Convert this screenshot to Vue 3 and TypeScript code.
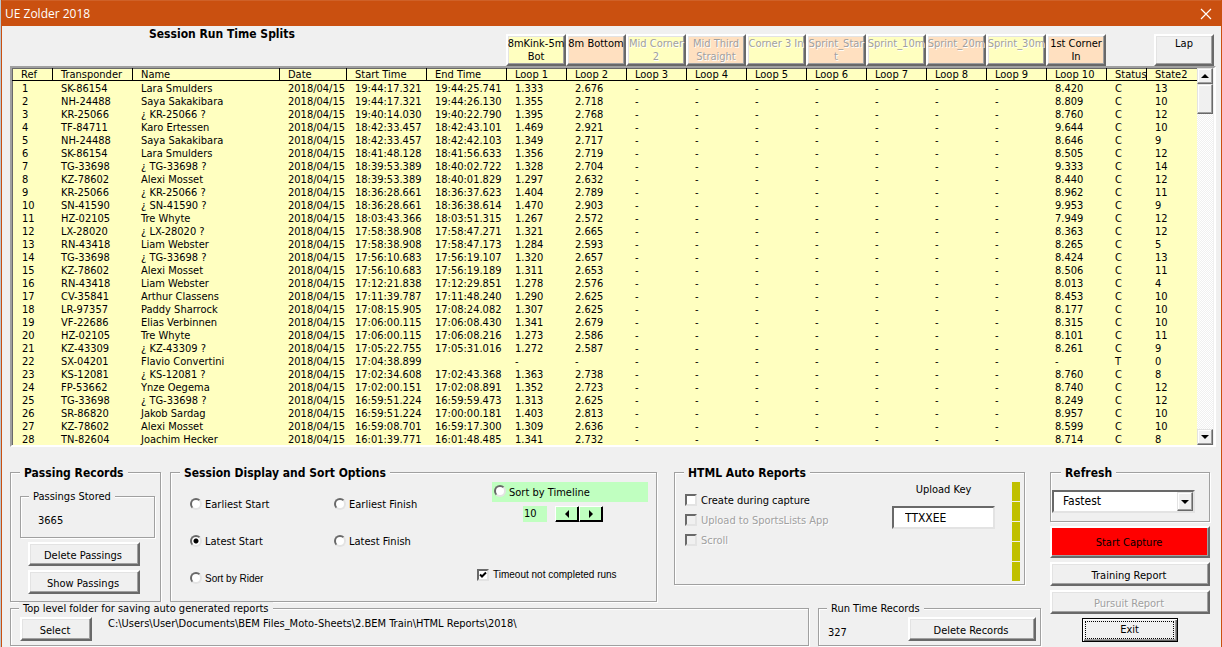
<script setup lang="ts">
import { ref } from 'vue'

interface LoopButton {
  label: string
  tone: 'yellow' | 'peach'
  enabled: boolean
}

const loopButtons: LoopButton[] = [
  { label: '8mKink-5m\nBot', tone: 'yellow', enabled: true },
  { label: '8m Bottom', tone: 'peach', enabled: true },
  { label: 'Mid Corner\n2', tone: 'yellow', enabled: false },
  { label: 'Mid Third\nStraight', tone: 'peach', enabled: false },
  { label: 'Corner 3 In', tone: 'yellow', enabled: false },
  { label: 'Sprint_Star\nt', tone: 'peach', enabled: false },
  { label: 'Sprint_10m', tone: 'yellow', enabled: false },
  { label: 'Sprint_20m', tone: 'peach', enabled: false },
  { label: 'Sprint_30m', tone: 'yellow', enabled: false },
  { label: '1st Corner\nIn', tone: 'peach', enabled: true },
]

const loopNumbers = Array.from({ length: 10 }, (_, i) => i + 1)

// transponder | name | start | end | loop 1 | loop 2 | loop 10 | status | state2
const source = `SK-86154|Lara Smulders|19:44:17.321|19:44:25.741|1.333|2.676|8.420|C|13
NH-24488|Saya Sakakibara|19:44:17.321|19:44:26.130|1.355|2.718|8.809|C|10
KR-25066|¿ KR-25066 ?|19:40:14.030|19:40:22.790|1.395|2.768|8.760|C|12
TF-84711|Karo Ertessen|18:42:33.457|18:42:43.101|1.469|2.921|9.644|C|10
NH-24488|Saya Sakakibara|18:42:33.457|18:42:42.103|1.349|2.717|8.646|C|9
SK-86154|Lara Smulders|18:41:48.128|18:41:56.633|1.356|2.719|8.505|C|12
TG-33698|¿ TG-33698 ?|18:39:53.389|18:40:02.722|1.328|2.704|9.333|C|14
KZ-78602|Alexi Mosset|18:39:53.389|18:40:01.829|1.297|2.632|8.440|C|12
KR-25066|¿ KR-25066 ?|18:36:28.661|18:36:37.623|1.404|2.789|8.962|C|11
SN-41590|¿ SN-41590 ?|18:36:28.661|18:36:38.614|1.470|2.903|9.953|C|9
HZ-02105|Tre Whyte|18:03:43.366|18:03:51.315|1.267|2.572|7.949|C|12
LX-28020|¿ LX-28020 ?|17:58:38.908|17:58:47.271|1.321|2.665|8.363|C|12
RN-43418|Liam Webster|17:58:38.908|17:58:47.173|1.284|2.593|8.265|C|5
TG-33698|¿ TG-33698 ?|17:56:10.683|17:56:19.107|1.320|2.657|8.424|C|13
KZ-78602|Alexi Mosset|17:56:10.683|17:56:19.189|1.311|2.653|8.506|C|11
RN-43418|Liam Webster|17:12:21.838|17:12:29.851|1.278|2.576|8.013|C|4
CV-35841|Arthur Classens|17:11:39.787|17:11:48.240|1.290|2.625|8.453|C|10
LR-97357|Paddy Sharrock|17:08:15.905|17:08:24.082|1.307|2.625|8.177|C|10
VF-22686|Elias Verbinnen|17:06:00.115|17:06:08.430|1.341|2.679|8.315|C|10
HZ-02105|Tre Whyte|17:06:00.115|17:06:08.216|1.273|2.586|8.101|C|11
KZ-43309|¿ KZ-43309 ?|17:05:22.755|17:05:31.016|1.272|2.587|8.261|C|9
SX-04201|Flavio Convertini|17:04:38.899||-|-|-|T|0
KS-12081|¿ KS-12081 ?|17:02:34.608|17:02:43.368|1.363|2.738|8.760|C|8
FP-53662|Ynze Oegema|17:02:00.151|17:02:08.891|1.352|2.723|8.740|C|12
TG-33698|¿ TG-33698 ?|16:59:51.224|16:59:59.473|1.313|2.625|8.249|C|12
SR-86820|Jakob Sardag|16:59:51.224|17:00:00.181|1.403|2.813|8.957|C|10
KZ-78602|Alexi Mosset|16:59:08.701|16:59:17.300|1.309|2.636|8.599|C|10
TN-82604|Joachim Hecker|16:01:39.771|16:01:48.485|1.341|2.732|8.714|C|8`

const rows: string[][] = source.split('\n').map((line, i) => {
  const [transponder, name, start, end, loop1, loop2, loop10, status, state] = line.split('|')
  return [
    String(i + 1), transponder, name, '2018/04/15', start, end,
    loop1, loop2, '-', '-', '-', '-', '-', '-', '-', loop10, status, state,
  ]
})

const sortBy = ref('latest-start')
const timeout = ref(true)
const createReports = ref(false)
const timeline = ref(10)
const uploadKey = ref('TTXXEE')
const refreshRate = ref('Fastest')
</script>

<template>
  <div class="window">
    <header class="titlebar">
      <span>UE Zolder 2018</span>
      <button class="close" type="button" aria-label="Close">
        <svg width="12" height="12" viewBox="0 0 12 12"><path d="M1 1L11 11M11 1L1 11" stroke="#fff" stroke-width="1.2" fill="none" /></svg>
      </button>
    </header>

    <main>
      <div class="top">
        <h1>Session Run Time Splits</h1>
        <button
          v-for="b in loopButtons"
          :key="b.label"
          type="button"
          class="btn loop"
          :class="b.tone"
          :disabled="!b.enabled"
        >{{ b.label }}</button>
        <button type="button" class="btn loop lap">Lap</button>
      </div>

      <div class="list">
        <table>
          <colgroup>
            <col class="c-ref"><col class="c-time"><col><col class="c-date">
            <col class="c-time"><col class="c-time">
            <col v-for="n in loopNumbers" :key="n" class="c-loop">
            <col class="c-status"><col class="c-state">
          </colgroup>
          <thead>
            <tr>
              <th>Ref</th><th>Transponder</th><th>Name</th><th>Date</th><th>Start Time</th><th>End Time</th>
              <th v-for="n in loopNumbers" :key="n">Loop {{ n }}</th>
              <th>Status</th><th>State2</th>
            </tr>
          </thead>
          <tbody>
            <tr v-for="row in rows" :key="row[0]">
              <td v-for="(cell, i) in row" :key="i">{{ cell }}</td>
            </tr>
          </tbody>
        </table>
        <div class="scroll">
          <button type="button" class="sbtn" aria-label="Scroll up">
            <svg width="8" height="4" viewBox="0 0 8 4"><path d="M0 4L4 0L8 4Z" /></svg>
          </button>
          <div class="thumb"></div>
          <div class="track"></div>
          <button type="button" class="sbtn" aria-label="Scroll down">
            <svg width="8" height="4" viewBox="0 0 8 4"><path d="M0 0L4 4L8 0Z" /></svg>
          </button>
        </div>
      </div>

      <div class="bottom">
        <div class="left">
          <div class="groups">
            <fieldset class="big passing">
              <legend>Passing Records</legend>
              <fieldset class="small stored">
                <legend>Passings Stored</legend>
                <output>3665</output>
              </fieldset>
              <button type="button" class="btn">Delete Passings</button>
              <button type="button" class="btn">Show Passings</button>
            </fieldset>

            <fieldset class="big session">
              <legend>Session Display and Sort Options</legend>
              <div class="sorts">
                <label><input v-model="sortBy" type="radio" name="sort" value="earliest-start">Earliest Start</label>
                <label><input v-model="sortBy" type="radio" name="sort" value="earliest-finish">Earliest Finish</label>
                <label><input v-model="sortBy" type="radio" name="sort" value="latest-start">Latest Start</label>
                <label><input v-model="sortBy" type="radio" name="sort" value="latest-finish">Latest Finish</label>
                <label class="narrow"><input v-model="sortBy" type="radio" name="sort" value="rider">Sort by Rider</label>
              </div>
              <div class="timeline">
                <label class="green"><input v-model="sortBy" type="radio" name="sort" value="timeline">Sort by Timeline</label>
                <div class="spinner">
                  <output>{{ timeline }}</output>
                  <button type="button" class="spin" aria-label="Decrease" @click="timeline--">
                    <svg width="4" height="8" viewBox="0 0 4 8"><path d="M4 0L0 4L4 8Z" /></svg>
                  </button>
                  <button type="button" class="spin" aria-label="Increase" @click="timeline++">
                    <svg width="4" height="8" viewBox="0 0 4 8"><path d="M0 0L4 4L0 8Z" /></svg>
                  </button>
                </div>
                <label class="narrow timeout"><input v-model="timeout" type="checkbox">Timeout not completed runs</label>
              </div>
            </fieldset>

            <fieldset class="big html">
              <legend>HTML Auto Reports</legend>
              <div class="checks">
                <label><input v-model="createReports" type="checkbox">Create during capture</label>
                <label class="off"><input type="checkbox" disabled>Upload to SportsLists App</label>
                <label class="off"><input type="checkbox" disabled>Scroll</label>
              </div>
              <div class="key">
                <label for="upload-key">Upload Key</label>
                <input id="upload-key" v-model="uploadKey" type="text">
              </div>
              <div class="meter"><i v-for="n in 5" :key="n"></i></div>
            </fieldset>
          </div>

          <div class="groups">
            <fieldset class="small folder">
              <legend>Top level folder for saving auto generated reports</legend>
              <button type="button" class="btn">Select</button>
              <span>C:\Users\User\Documents\BEM Files_Moto-Sheets\2.BEM Train\HTML Reports\2018\</span>
            </fieldset>
            <fieldset class="small records">
              <legend>Run Time Records</legend>
              <output>327</output>
              <button type="button" class="btn">Delete Records</button>
            </fieldset>
          </div>
        </div>

        <div class="right">
          <fieldset class="big refresh">
            <legend>Refresh</legend>
            <div class="combo">
              <select v-model="refreshRate" aria-label="Refresh">
                <option>Fastest</option>
                <option>Slowest</option>
              </select>
              <span class="drop"><svg width="8" height="4" viewBox="0 0 8 4"><path d="M0 0L4 4L8 0Z" /></svg></span>
            </div>
          </fieldset>
          <button type="button" class="btn capture">Start Capture</button>
          <button type="button" class="btn">Training Report</button>
          <button type="button" class="btn" disabled>Pursuit Report</button>
          <button type="button" class="btn exit"><span>Exit</span></button>
        </div>
      </div>
    </main>
  </div>
</template>

<style>
body {
  margin: 0;
  background: #b9c6d0;
}
</style>

<style scoped>
.window,
.window * {
  box-sizing: border-box;
}
.window {
  min-height: 100vh;
  margin-left: 1px;
  border: solid #ca5010;
  border-width: 0 1px;
  background: #f0f0f0;
  color: #000;
  font: 11px/13px "DejaVu Sans Condensed", Tahoma, "Noto Sans", sans-serif;
}
button,
input,
select {
  font: inherit;
  color: inherit;
  margin: 0;
  padding: 0;
  border-radius: 0;
}
svg {
  display: block;
}
.titlebar {
  height: 26px;
  padding: 0 9px 0 3px;
  display: flex;
  align-items: center;
  justify-content: space-between;
  background: #ca5010;
  border-top: 1px solid #cf6128;
  color: #fff;
  font: 12px/16px "Open Sans", "Noto Sans", sans-serif;
}
.close {
  border: 0;
  background: none;
}
main {
  padding: 0 5px 0 8px;
}
.top {
  height: 40px;
  display: flex;
  align-items: flex-end;
}
h1 {
  flex: 1;
  align-self: flex-start;
  margin: 0;
  padding-left: 139px;
  font-size: 12px;
  line-height: 16px;
}
.btn {
  border: 2px solid;
  border-color: #fff #696969 #696969 #fff;
  box-shadow: inset -1px -1px 0 #a0a0a0, inset 1px 1px 0 #e3e3e3;
  background: #f0f0f0;
  height: 24px;
  padding: 2px 2px 0 0;
  text-align: center;
  white-space: nowrap;
}
.btn:disabled {
  color: #a0a0a0;
  text-shadow: 1px 1px 0 #fff;
}
.loop {
  width: 60px;
  height: 32px;
  display: flex;
  justify-content: center;
  align-items: flex-start;
  padding: 1px 0 0;
  white-space: pre;
}
.loop.yellow {
  background: #ffffc0;
}
.loop.peach {
  background: #ffe0c0;
}
.lap {
  margin: 0 2px 0 48px;
}
.list {
  display: flex;
  border: 2px solid;
  border-color: #a0a0a0 #fff #fff #a0a0a0;
  box-shadow: inset 1px 1px 0 #696969;
  background: #ffffc0;
}
table {
  flex: 1;
  table-layout: fixed;
  width: 100%;
  border-collapse: separate;
  border-spacing: 0;
}
th,
td {
  height: 13px;
  padding: 2px 0 0 8px;
  line-height: 11px;
  font-weight: 400;
  text-align: left;
  white-space: nowrap;
  overflow: hidden;
}
th {
  border-right: 1px solid #000;
  border-bottom: 1px solid #000;
  line-height: 10px;
}
td:first-child {
  padding-left: 10px;
}
th:first-child {
  padding-left: 9px;
}
th:last-child {
  border-right: 0;
}
.c-ref { width: 41px; }
.c-time { width: 80px; }
.c-date { width: 67px; }
.c-loop { width: 60px; }
.c-status { width: 40px; }
.c-state { width: 50px; }
.scroll {
  width: 17px;
  padding-right: 1px;
  background: #f0f0f0;
  display: flex;
  flex-direction: column;
}
.sbtn,
.thumb,
.drop {
  height: 16px;
  display: flex;
  align-items: center;
  justify-content: center;
  background: #f0f0f0;
  border: 1px solid;
  border-color: #e3e3e3 #696969 #696969 #e3e3e3;
  box-shadow: inset -1px -1px 0 #a0a0a0, inset 1px 1px 0 #fff;
}
.thumb {
  height: 30px;
}
.track {
  flex: 1;
  background: repeating-conic-gradient(#fff 0 25%, #f0f0f0 0 50%) 0 0 / 2px 2px;
}
.bottom {
  display: flex;
  gap: 9px;
  padding: 17px 6px 0 0;
}
.left {
  flex: 1;
}
.right {
  width: 160px;
  display: flex;
  flex-direction: column;
  gap: 4px;
}
.groups {
  display: flex;
}
fieldset {
  min-width: 0;
  margin: 0;
  padding: 0;
  border: 1px solid #a0a0a0;
  box-shadow: 1px 1px 0 #fff, inset 1px 1px 0 #fff;
}
legend {
  background: #f0f0f0;
  margin-left: 9px;
  padding: 0 4px;
}
.big > legend {
  padding-top: 2px;
  font-size: 12px;
  line-height: 14px;
  font-weight: 700;
}
.small > legend {
  padding-top: 2px;
  line-height: 10px;
}
.passing {
  width: 151px;
  height: 138px;
  padding: 10px 5px 0 9px;
}
.passing > legend {
  margin-left: 0;
}
.passing > .btn {
  display: block;
  width: 112px;
  margin: 4px 0 0 8px;
}
.stored {
  height: 48px;
  padding: 12px 0 0 17px;
}
.stored > legend {
  margin-left: -9px;
}
output {
  display: block;
}
.session {
  flex: 1;
  height: 138px;
  margin: 0 17px 0 9px;
  display: flex;
  justify-content: space-between;
}
.sorts {
  display: grid;
  grid-template-columns: 144px 100px;
  grid-auto-rows: 37px;
  padding: 6px 0 0 19px;
}
label {
  display: flex;
  align-items: center;
  white-space: nowrap;
}
.narrow {
  font-family: "Liberation Sans", Arial, sans-serif;
  font-size: 10px;
}
input[type="radio"],
input[type="checkbox"] {
  appearance: none;
  flex: none;
  width: 12px;
  height: 12px;
  margin-right: 4px;
  background: #fff;
  border: 2px solid;
  border-color: #696969 #e3e3e3 #e3e3e3 #696969;
}
input[type="radio"] {
  border-radius: 50%;
  margin: 0 3px 2px 0;
}
input[type="radio"]:checked {
  background: radial-gradient(circle, #000 2px, #fff 3px);
}
input[type="checkbox"]:disabled {
  background: #f0f0f0;
}
input[type="checkbox"]:checked {
  background: #fff url("data:image/svg+xml,%3Csvg xmlns='http://www.w3.org/2000/svg' viewBox='0 0 8 8'%3E%3Cpath d='M1 3.5L3 5.5L7 1.5' fill='none' stroke='%23000' stroke-width='2'/%3E%3C/svg%3E");
}
.off {
  color: #a0a0a0;
  text-shadow: 1px 1px 0 #fff;
}
.timeline {
  width: 179px;
  padding: 2px 8px 0 0;
}
.green {
  height: 20px;
  margin-left: 15px;
  padding-left: 2px;
  background: #c0ffc0;
}
.spinner {
  display: flex;
  margin: 4px 0 0 46px;
}
.spinner output {
  width: 24px;
  height: 16px;
  margin-right: 8px;
  padding-left: 1px;
  line-height: 15px;
  background: #c0ffc0;
}
.spin {
  width: 24px;
  height: 16px;
  display: flex;
  align-items: center;
  justify-content: center;
  background: #c0ffc0;
  border: 1px solid;
  border-color: #fff #000 #000 #fff;
  box-shadow: inset -1px -1px 0 #000;
}
.timeout {
  margin-top: 46px;
}
.html {
  width: 351px;
  height: 121px;
  margin-right: 16px;
  display: flex;
  justify-content: space-between;
  padding-right: 4px;
}
.checks {
  padding: 10px 0 0 10px;
}
.checks label {
  height: 20px;
}
.key {
  width: 103px;
  margin-left: auto;
  margin-right: 17px;
  padding-top: 3px;
}
.key label {
  justify-content: center;
  margin-bottom: 10px;
}
.key input {
  display: block;
  width: 100%;
  height: 23px;
  padding-left: 11px;
  background: #fff;
  border: 2px solid;
  border-color: #696969 #e3e3e3 #e3e3e3 #696969;
  font-size: 12px;
}
.meter {
  display: flex;
  flex-direction: column;
  gap: 1px;
  padding-top: 2px;
}
.meter i {
  width: 8px;
  height: 19px;
  background: #c0c000;
}
.folder,
.records {
  height: 44px;
  display: flex;
  align-items: flex-start;
  padding-top: 3px;
}
.folder {
  flex: 1;
  margin-right: 9px;
  padding-left: 9px;
}
.folder > legend,
.records > legend {
  margin-left: -1px;
}
.folder .btn {
  width: 72px;
  margin-right: 16px;
}
.records {
  width: 223px;
  padding-left: 9px;
  padding-right: 4px;
  justify-content: space-between;
}
.records output {
  padding-top: 9px;
}
.records .btn {
  width: 128px;
}
.refresh {
  height: 58px;
  padding: 10px 0 0 1px;
}
.combo {
  position: relative;
  width: 143px;
  height: 23px;
}
.combo select {
  appearance: none;
  width: 100%;
  height: 100%;
  padding-left: 9px;
  background: #fff;
  border: 2px solid;
  border-color: #696969 #e3e3e3 #e3e3e3 #696969;
  font-size: 12px;
}
.drop {
  position: absolute;
  top: 2px;
  right: 2px;
  bottom: 2px;
  width: 16px;
  height: auto;
  pointer-events: none;
}
.capture {
  height: 32px;
  padding-top: 0;
  background: #f00;
  box-shadow: inset -1px -1px 0 #a0a0a0;
}
.exit {
  width: 96px;
  align-self: center;
  padding: 1px;
  border: 1px solid #000;
  box-shadow: inset 1px 1px 0 #fff, inset -1px -1px 0 #696969, inset -2px -2px 0 #a0a0a0;
}
.exit span {
  display: block;
  margin: 0 2px 0 1px;
  border: 1px dotted #000;
  line-height: 16px;
}
</style>
